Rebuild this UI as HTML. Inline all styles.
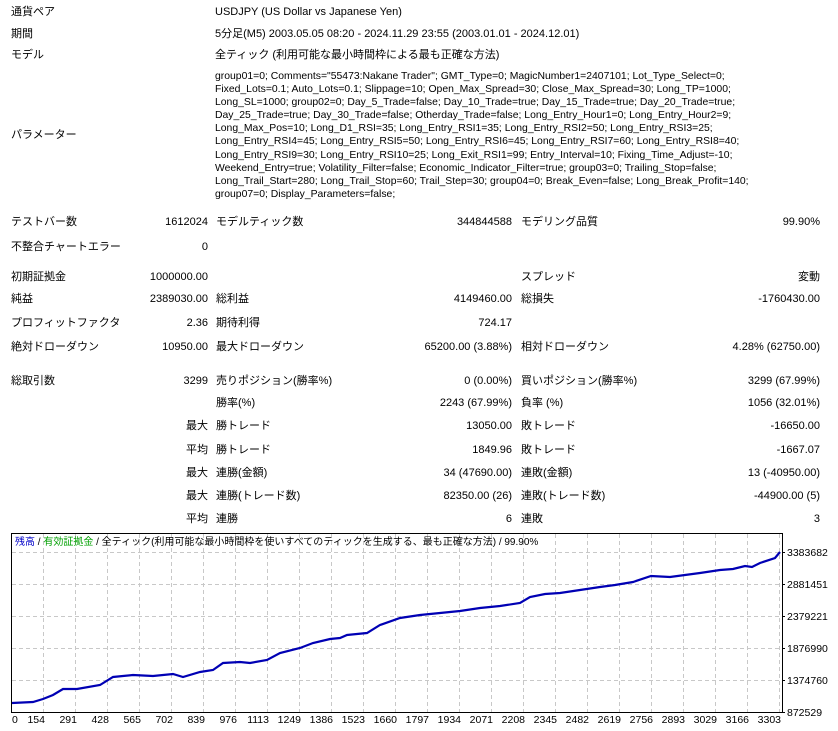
<!DOCTYPE html>
<html><head><meta charset="utf-8"><style>
html,body{margin:0;padding:0;background:#fff;}
body{width:838px;height:731px;position:relative;overflow:hidden;font-family:"Liberation Sans","Noto Sans CJK JP",sans-serif;font-size:11px;color:#000;}
.t{position:absolute;white-space:nowrap;line-height:14px;height:14px;}
.r{text-align:right;}
</style></head><body>
<div class="t" style="left:11px;top:5px">通貨ペア</div>
<div class="t" style="left:215px;top:5px">USDJPY (US Dollar vs Japanese Yen)</div>
<div class="t" style="left:11px;top:27px">期間</div>
<div class="t" style="left:215px;top:27px">5分足(M5) 2003.05.05 08:20 - 2024.11.29 23:55 (2003.01.01 - 2024.12.01)</div>
<div class="t" style="left:11px;top:48px">モデル</div>
<div class="t" style="left:215px;top:48px">全ティック (利用可能な最小時間枠による最も正確な方法)</div>
<div class="t" style="left:11px;top:128px">パラメーター</div>
<div style="position:absolute;left:215px;top:70px;line-height:13.1px;font-size:10.4px;white-space:nowrap">
group01=0; Comments="55473:Nakane Trader"; GMT_Type=0; MagicNumber1=2407101; Lot_Type_Select=0;<br>
Fixed_Lots=0.1; Auto_Lots=0.1; Slippage=10; Open_Max_Spread=30; Close_Max_Spread=30; Long_TP=1000;<br>
Long_SL=1000; group02=0; Day_5_Trade=false; Day_10_Trade=true; Day_15_Trade=true; Day_20_Trade=true;<br>
Day_25_Trade=true; Day_30_Trade=false; Otherday_Trade=false; Long_Entry_Hour1=0; Long_Entry_Hour2=9;<br>
Long_Max_Pos=10; Long_D1_RSI=35; Long_Entry_RSI1=35; Long_Entry_RSI2=50; Long_Entry_RSI3=25;<br>
Long_Entry_RSI4=45; Long_Entry_RSI5=50; Long_Entry_RSI6=45; Long_Entry_RSI7=60; Long_Entry_RSI8=40;<br>
Long_Entry_RSI9=30; Long_Entry_RSI10=25; Long_Exit_RSI1=99; Entry_Interval=10; Fixing_Time_Adjust=-10;<br>
Weekend_Entry=true; Volatility_Filter=false; Economic_Indicator_Filter=true; group03=0; Trailing_Stop=false;<br>
Long_Trail_Start=280; Long_Trail_Stop=60; Trail_Step=30; group04=0; Break_Even=false; Long_Break_Profit=140;<br>
group07=0; Display_Parameters=false;
</div>

<div class="t" style="left:11px;top:215px">テストバー数</div><div class="t r" style="right:630px;top:215px">1612024</div>
<div class="t" style="left:216px;top:215px">モデルティック数</div><div class="t r" style="right:326px;top:215px">344844588</div>
<div class="t" style="left:521px;top:215px">モデリング品質</div><div class="t r" style="right:18px;top:215px">99.90%</div>

<div class="t" style="left:11px;top:240px">不整合チャートエラー</div><div class="t r" style="right:630px;top:240px">0</div>

<div class="t" style="left:11px;top:270px">初期証拠金</div><div class="t r" style="right:630px;top:270px">1000000.00</div>
<div class="t" style="left:521px;top:270px">スプレッド</div><div class="t r" style="right:18px;top:270px">変動</div>

<div class="t" style="left:11px;top:292px">純益</div><div class="t r" style="right:630px;top:292px">2389030.00</div>
<div class="t" style="left:216px;top:292px">総利益</div><div class="t r" style="right:326px;top:292px">4149460.00</div>
<div class="t" style="left:521px;top:292px">総損失</div><div class="t r" style="right:18px;top:292px">-1760430.00</div>

<div class="t" style="left:11px;top:316px">プロフィットファクタ</div><div class="t r" style="right:630px;top:316px">2.36</div>
<div class="t" style="left:216px;top:316px">期待利得</div><div class="t r" style="right:326px;top:316px">724.17</div>

<div class="t" style="left:11px;top:340px">絶対ドローダウン</div><div class="t r" style="right:630px;top:340px">10950.00</div>
<div class="t" style="left:216px;top:340px">最大ドローダウン</div><div class="t r" style="right:326px;top:340px">65200.00 (3.88%)</div>
<div class="t" style="left:521px;top:340px">相対ドローダウン</div><div class="t r" style="right:18px;top:340px">4.28% (62750.00)</div>

<div class="t" style="left:11px;top:374px">総取引数</div><div class="t r" style="right:630px;top:374px">3299</div>
<div class="t" style="left:216px;top:374px">売りポジション(勝率%)</div><div class="t r" style="right:326px;top:374px">0 (0.00%)</div>
<div class="t" style="left:521px;top:374px">買いポジション(勝率%)</div><div class="t r" style="right:18px;top:374px">3299 (67.99%)</div>

<div class="t" style="left:216px;top:396px">勝率(%)</div><div class="t r" style="right:326px;top:396px">2243 (67.99%)</div>
<div class="t" style="left:521px;top:396px">負率 (%)</div><div class="t r" style="right:18px;top:396px">1056 (32.01%)</div>

<div class="t r" style="right:630px;top:419px">最大</div>
<div class="t" style="left:216px;top:419px">勝トレード</div><div class="t r" style="right:326px;top:419px">13050.00</div>
<div class="t" style="left:521px;top:419px">敗トレード</div><div class="t r" style="right:18px;top:419px">-16650.00</div>

<div class="t r" style="right:630px;top:443px">平均</div>
<div class="t" style="left:216px;top:443px">勝トレード</div><div class="t r" style="right:326px;top:443px">1849.96</div>
<div class="t" style="left:521px;top:443px">敗トレード</div><div class="t r" style="right:18px;top:443px">-1667.07</div>

<div class="t r" style="right:630px;top:466px">最大</div>
<div class="t" style="left:216px;top:466px">連勝(金額)</div><div class="t r" style="right:326px;top:466px">34 (47690.00)</div>
<div class="t" style="left:521px;top:466px">連敗(金額)</div><div class="t r" style="right:18px;top:466px">13 (-40950.00)</div>

<div class="t r" style="right:630px;top:489px">最大</div>
<div class="t" style="left:216px;top:489px">連勝(トレード数)</div><div class="t r" style="right:326px;top:489px">82350.00 (26)</div>
<div class="t" style="left:521px;top:489px">連敗(トレード数)</div><div class="t r" style="right:18px;top:489px">-44900.00 (5)</div>

<div class="t r" style="right:630px;top:512px">平均</div>
<div class="t" style="left:216px;top:512px">連勝</div><div class="t r" style="right:326px;top:512px">6</div>
<div class="t" style="left:521px;top:512px">連敗</div><div class="t r" style="right:18px;top:512px">3</div>

<svg width="838" height="731" style="position:absolute;left:0;top:0" xmlns="http://www.w3.org/2000/svg" font-family="Liberation Sans, Noto Sans CJK JP, sans-serif" font-size="10.5">
<g stroke="#c8c8c8" stroke-dasharray="4,3" stroke-width="1">
<line x1="12" y1="552.5" x2="782" y2="552.5"/><line x1="12" y1="584.5" x2="782" y2="584.5"/><line x1="12" y1="616.5" x2="782" y2="616.5"/><line x1="12" y1="648.5" x2="782" y2="648.5"/><line x1="12" y1="680.5" x2="782" y2="680.5"/>
<line x1="43.5" y1="534" x2="43.5" y2="712"/><line x1="75.5" y1="534" x2="75.5" y2="712"/><line x1="107.5" y1="534" x2="107.5" y2="712"/><line x1="139.5" y1="534" x2="139.5" y2="712"/><line x1="171.5" y1="534" x2="171.5" y2="712"/><line x1="203.5" y1="534" x2="203.5" y2="712"/><line x1="235.5" y1="534" x2="235.5" y2="712"/><line x1="267.5" y1="534" x2="267.5" y2="712"/><line x1="299.5" y1="534" x2="299.5" y2="712"/><line x1="331.5" y1="534" x2="331.5" y2="712"/><line x1="363.5" y1="534" x2="363.5" y2="712"/><line x1="395.5" y1="534" x2="395.5" y2="712"/><line x1="427.5" y1="534" x2="427.5" y2="712"/><line x1="459.5" y1="534" x2="459.5" y2="712"/><line x1="491.5" y1="534" x2="491.5" y2="712"/><line x1="523.5" y1="534" x2="523.5" y2="712"/><line x1="555.5" y1="534" x2="555.5" y2="712"/><line x1="587.5" y1="534" x2="587.5" y2="712"/><line x1="619.5" y1="534" x2="619.5" y2="712"/><line x1="651.5" y1="534" x2="651.5" y2="712"/><line x1="683.5" y1="534" x2="683.5" y2="712"/><line x1="715.5" y1="534" x2="715.5" y2="712"/><line x1="747.5" y1="534" x2="747.5" y2="712"/><line x1="779.5" y1="534" x2="779.5" y2="712"/>
</g>
<rect x="11.5" y="533.5" width="771" height="179" fill="none" stroke="#000"/>
<g stroke="#000">
<line x1="782" y1="552.5" x2="785" y2="552.5"/><line x1="782" y1="584.5" x2="785" y2="584.5"/><line x1="782" y1="616.5" x2="785" y2="616.5"/><line x1="782" y1="648.5" x2="785" y2="648.5"/><line x1="782" y1="680.5" x2="785" y2="680.5"/><line x1="782" y1="712.5" x2="785" y2="712.5"/>
</g>
<polyline fill="none" stroke="#0000b4" stroke-width="2.2" points="12,703 33,702 43,699 53,695 63,689 77,689 100,685 113,677 133,675 153,676 173,674 183,677 200,672 213,670 223,663 240,662 250,663 267,660 280,653 300,648 313,643 330,639 340,638 347,635 367,633 380,625 400,618 420,615 440,613 460,611 480,608 500,606 520,603 530,597 545,594 560,593 580,590 600,587 615,585 633,582 651,576 670,577 700,573 720,570 733,569 745,566 752,567 760,563 775,558 780,552"/>
<g fill="#000">
<text x="787" y="556">3383682</text><text x="787" y="588">2881451</text><text x="787" y="620">2379221</text><text x="787" y="652">1876990</text><text x="787" y="684">1374760</text><text x="787" y="716">872529</text>
</g>
<g fill="#000" text-anchor="end">
<text x="12" y="723" text-anchor="start">0</text>
<text x="45" y="723">154</text><text x="77" y="723">291</text><text x="109" y="723">428</text><text x="141" y="723">565</text><text x="173" y="723">702</text><text x="205" y="723">839</text><text x="237" y="723">976</text><text x="269" y="723">1113</text><text x="301" y="723">1249</text><text x="333" y="723">1386</text><text x="365" y="723">1523</text><text x="397" y="723">1660</text><text x="429" y="723">1797</text><text x="461" y="723">1934</text><text x="493" y="723">2071</text><text x="525" y="723">2208</text><text x="557" y="723">2345</text><text x="589" y="723">2482</text><text x="621" y="723">2619</text><text x="653" y="723">2756</text><text x="685" y="723">2893</text><text x="717" y="723">3029</text><text x="749" y="723">3166</text><text x="781" y="723">3303</text>
</g>
<text x="15" y="545" font-size="10"><tspan fill="#0000c8">残高</tspan><tspan fill="#000"> / </tspan><tspan fill="#00a000">有効証拠金</tspan><tspan fill="#000"> / 全ティック(利用可能な最小時間枠を使いすべてのティックを生成する、最も正確な方法) / 99.90%</tspan></text>
</svg>
</body></html>
